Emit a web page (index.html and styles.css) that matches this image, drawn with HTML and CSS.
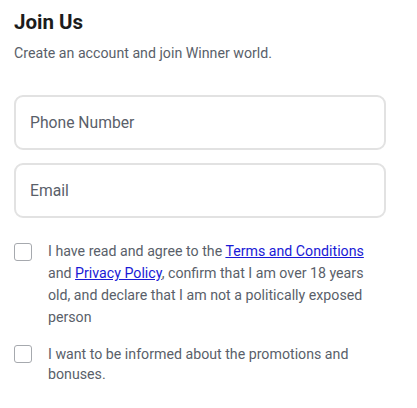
FILE: index.html
```html
<!DOCTYPE html>
<html>
<head>
<meta charset="utf-8">
<link rel="stylesheet" href="styles.css">
</head>
<body>
<div class="page">
  <h1 class="title">Join Us</h1>
  <p class="subtitle">Create an account and join Winner world.</p>
  <div class="fields">
    <div class="field">Phone Number</div>
    <div class="field">Email</div>
  </div>
  <div class="checks">
    <label class="check">
      <span class="box"></span>
      <span class="text">I have read and agree to the <a href="#">Terms and Conditions</a> and <a href="#">Privacy Policy</a>, confirm that I am over 18 years old, and declare that I am not a politically exposed person</span>
    </label>
    <label class="check check-short">
      <span class="box"></span>
      <span class="text">I want to be informed about the promotions and bonuses.</span>
    </label>
  </div>
</div>
</body>
</html>
```
FILE: styles.css
```css
* { box-sizing: border-box; }
body {
  margin: 0;
  background: #fff;
  font-family: Roboto, "Liberation Sans", sans-serif;
}
.page {
  padding: 10px 31px 0 14px;
}
.title {
  margin: 0;
  font-size: 20.5px;
  font-weight: 700;
  color: #1c1c1c;
  line-height: 24px;
}
.subtitle {
  margin: 10px 0 0;
  font-size: 14.2px;
  color: #5a5f6a;
  line-height: 18px;
}
.fields {
  margin-top: 33px;
  display: flex;
  flex-direction: column;
  gap: 13px;
}
.field {
  height: 55px;
  border: 2px solid #e2e2e2;
  border-radius: 9px;
  padding: 0 14px;
  display: flex;
  align-items: center;
  font-size: 15.7px;
  color: #5a5f6a;
}
.checks {
  margin-top: 22px;
  display: flex;
  flex-direction: column;
  gap: 16px;
}
.check {
  display: flex;
  gap: 16px;
  align-items: flex-start;
  padding-right: 14px;
}
.box {
  flex: none;
  width: 18px;
  height: 18px;
  margin-top: 3px;
  border: 1.5px solid #a6a9ae;
  border-radius: 3px;
}
.text {
  font-size: 14.2px;
  line-height: 22px;
  color: #5a5f6a;
}
.check-short .text {
  line-height: 20px;
}
.check-short .box {
  margin-top: 1px;
}
.text a {
  color: #1a1ad6;
  text-decoration: underline;
}
```
